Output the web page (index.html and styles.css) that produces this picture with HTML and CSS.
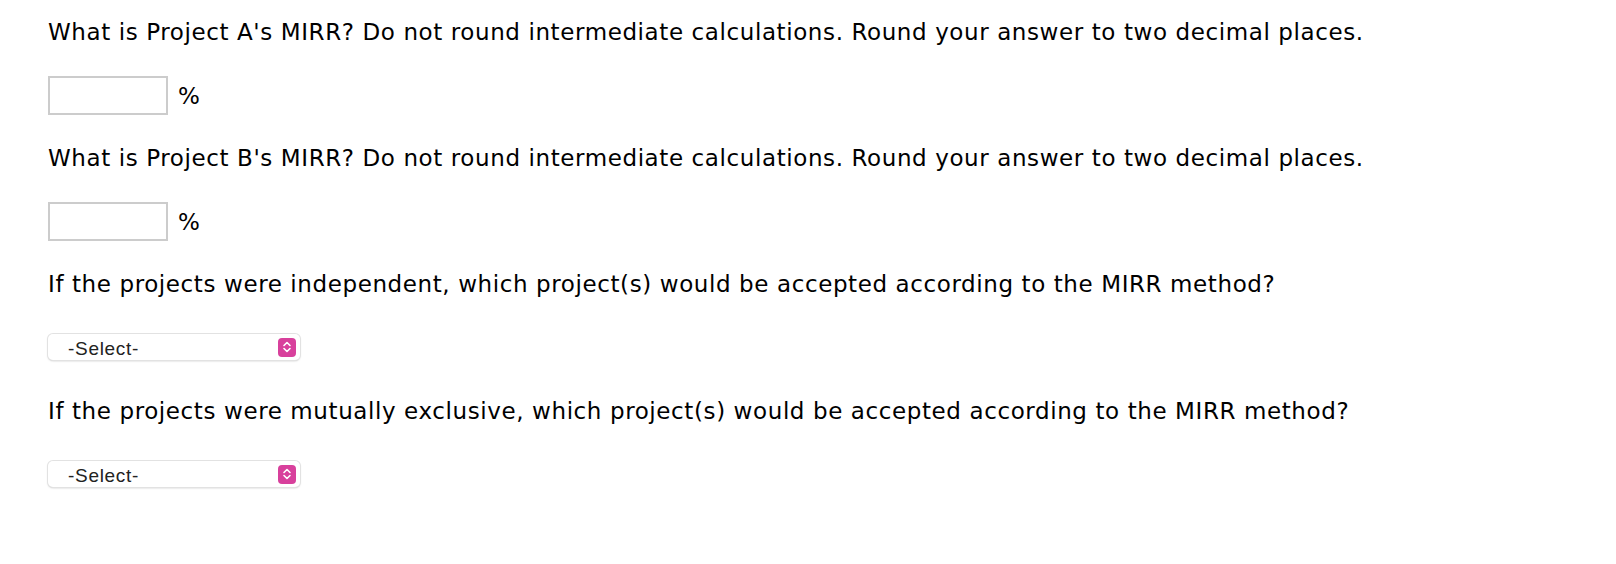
FILE: index.html
```html
<!DOCTYPE html>
<html>
<head>
<meta charset="utf-8">
<link rel="stylesheet" href="styles.css">
</head>
<body>
<div class="page">
  <p class="q">What is Project A's MIRR? Do not round intermediate calculations. Round your answer to two decimal places.</p>
  <div class="answer"><span class="box"></span><span class="unit">%</span></div>
  <p class="q">What is Project B's MIRR? Do not round intermediate calculations. Round your answer to two decimal places.</p>
  <div class="answer"><span class="box"></span><span class="unit">%</span></div>
  <p class="q">If the projects were independent, which project(s) would be accepted according to the MIRR method?</p>
  <div class="answer choice"><div class="select"><span class="sel-text">-Select-</span><span class="sel-btn"><svg width="10" height="14" viewBox="0 0 10 14"><path d="M2 5.5 L5 2.5 L8 5.5 M2 8.5 L5 11.5 L8 8.5" fill="none" stroke="#fff" stroke-width="1.6" stroke-linecap="round" stroke-linejoin="round"/></svg></span></div></div>
  <p class="q">If the projects were mutually exclusive, which project(s) would be accepted according to the MIRR method?</p>
  <div class="answer choice"><div class="select"><span class="sel-text">-Select-</span><span class="sel-btn"><svg width="10" height="14" viewBox="0 0 10 14"><path d="M2 5.5 L5 2.5 L8 5.5 M2 8.5 L5 11.5 L8 8.5" fill="none" stroke="#fff" stroke-width="1.6" stroke-linecap="round" stroke-linejoin="round"/></svg></span></div></div>
</div>
</body>
</html>
```
FILE: styles.css
```css
html, body {
  margin: 0;
  padding: 0;
  background: #fff;
}
.page {
  padding: 18px 0 0 48px;
  font-family: "DejaVu Sans", Verdana, sans-serif;
  font-size: 23px;
  letter-spacing: 0.6px;
  color: #000;
}
.q {
  margin: 0;
  line-height: 28px;
  white-space: nowrap;
}
.answer {
  display: flex;
  align-items: center;
  margin: 30px 0 29px 0;
}
.answer.choice {
  margin: 36px 0 37px 0;
}
.box {
  display: block;
  width: 116px;
  height: 35px;
  border: 2px solid #cccccc;
  background: #fff;
}
.unit {
  margin-left: 10px;
  letter-spacing: 0;
}
.select {
  display: flex;
  align-items: center;
  justify-content: space-between;
  width: 252px;
  height: 26px;
  border-radius: 5px;
  background: #fff;
  box-shadow: 0 0 0 1px #e2e2e2, 0 1px 2px rgba(0,0,0,0.25);
  box-sizing: border-box;
  padding: 0 4px 0 20px;
}
.sel-text {
  font-family: "Liberation Sans", Arial, sans-serif;
  font-size: 19px;
  color: #222;
  letter-spacing: 0.7px;
  padding-top: 4px;
}
.sel-btn {
  width: 18px;
  height: 19px;
  border-radius: 4px;
  background: #d8409c;
  display: flex;
  align-items: center;
  justify-content: center;
}
```
